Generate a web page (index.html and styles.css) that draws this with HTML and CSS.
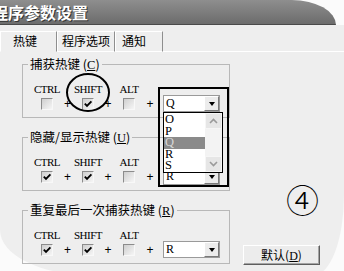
FILE: index.html
```html
<!DOCTYPE html>
<html lang="zh">

<head>
    <meta charset="UTF-8">
    <title>程序参数设置</title>
    <link rel="stylesheet" href="styles.css">
</head>

<body>
    <div class="window">
        <div class="titlebar"><span class="title">程序参数设置</span></div>
        <div class="client">
            <div class="tabs">
                <div class="tab tab-active tab-hotkey">热键</div>
                <div class="tab tab-options">程序选项</div>
                <div class="tab tab-notify">通知</div>
                <div class="tab-rest"></div>
            </div>
            <div class="panel">
                <fieldset class="group">
                    <legend>捕获热键 (<u>C</u>)</legend>
                    <div class="keys">
                        <span class="key">CTRL</span>
                        <span class="key key-shift">SHIFT</span>
                        <span class="key key-alt">ALT</span>
                        <span class="check"></span>
                        <span class="plus">+</span>
                        <span class="check checked"><svg viewBox="0 0 10 10"><path d="M1.8 4.6 L4 6.8 L8.4 2.4"/></svg></span>
                        <span class="plus">+</span>
                        <span class="check"></span>
                        <span class="plus">+</span>
                        <div class="combo"><span class="combo-value">Q</span><span class="combo-button"><i></i></span></div>
                    </div>
                </fieldset>

                <fieldset class="group">
                    <legend>隐藏/显示热键 (<u>U</u>)</legend>
                    <div class="keys">
                        <span class="key">CTRL</span>
                        <span class="key key-shift">SHIFT</span>
                        <span class="key key-alt">ALT</span>
                        <span class="check checked"><svg viewBox="0 0 10 10"><path d="M1.8 4.6 L4 6.8 L8.4 2.4"/></svg></span>
                        <span class="plus">+</span>
                        <span class="check checked"><svg viewBox="0 0 10 10"><path d="M1.8 4.6 L4 6.8 L8.4 2.4"/></svg></span>
                        <span class="plus">+</span>
                        <span class="check"></span>
                        <span class="plus">+</span>
                        <div class="combo"><span class="combo-value">R</span><span class="combo-button"><i></i></span></div>
                    </div>
                </fieldset>

                <div class="bottom-row">
                    <fieldset class="group group-last">
                        <legend>重复最后一次捕获热键 (<u>R</u>)</legend>
                        <div class="keys">
                            <span class="key">CTRL</span>
                            <span class="key key-shift">SHIFT</span>
                            <span class="key key-alt">ALT</span>
                            <span class="check checked"><svg viewBox="0 0 10 10"><path d="M1.8 4.6 L4 6.8 L8.4 2.4"/></svg></span>
                            <span class="plus">+</span>
                            <span class="check checked"><svg viewBox="0 0 10 10"><path d="M1.8 4.6 L4 6.8 L8.4 2.4"/></svg></span>
                            <span class="plus">+</span>
                            <span class="check"></span>
                            <span class="plus">+</span>
                            <div class="combo"><span class="combo-value">R</span><span class="combo-button"><i></i></span></div>
                        </div>
                    </fieldset>
                    <button class="default-button">默认(<u>D</u>)</button>
                </div>
            </div>
        </div>

        <!-- open dropdown of the first combo -->
        <div class="droplist">
            <div class="droplist-items">
                <div class="item">O</div>
                <div class="item">P</div>
                <div class="item item-selected">Q</div>
                <div class="item">R</div>
                <div class="item">S</div>
            </div>
            <div class="scrollbar">
                <span class="scroll-btn"><svg viewBox="0 0 9 6"><path d="M1 5 L4.5 1.5 L8 5"/></svg></span>
                <span class="scroll-track"></span>
                <span class="scroll-btn"><svg viewBox="0 0 9 6"><path d="M1 1 L4.5 4.5 L8 1"/></svg></span>
            </div>
        </div>

        <!-- annotation marks -->
        <div class="mark-ellipse"></div>
        <div class="mark-box"></div>
        <div class="mark-number">④</div>
    </div>
</body>

</html>
```

FILE: styles.css
```css
html,
body {
    margin: 0;
    height: 100%;
    overflow: hidden;
}

body {
    background: #fbfbfb;
    font-family: "Noto Sans CJK SC", sans-serif;
    font-size: 12px;
    color: #000;
}

.window {
    position: relative;
    width: 344px;
    height: 275px;
}

.titlebar {
    height: 25px;
    width: 336px;
    box-sizing: border-box;
    background: linear-gradient(#8e8e8e, #6c6c6c);
    border-bottom: 1px solid #4a4a4a;
    border-top-right-radius: 46px 26px;
    overflow: hidden;
}

.title {
    display: block;
    margin-left: -8px;
    font-size: 16px;
    font-weight: bold;
    line-height: 25px;
    color: #fff;
    text-shadow: 1px 1px 0 #333;
    white-space: nowrap;
}

.client {
    height: 250px;
    background: #eeeeee;
    border-bottom-left-radius: 90px 45px;
    border-bottom-right-radius: 30px 80px;
}

.tabs {
    display: flex;
    padding-top: 6px;
    height: 21px;
}

.tab {
    box-sizing: border-box;
    height: 21px;
    border-top: 1px solid #fff;
    border-left: 1px solid #fff;
    border-right: 1px solid #8e8e8e;
    border-bottom: 1px solid #fff;
    line-height: 17px;
    white-space: nowrap;
}

.tab-active {
    border-bottom-color: transparent;
}

.tab-hotkey {
    width: 57px;
    padding-left: 12px;
}

.tab-options {
    width: 58px;
    padding-left: 4px;
}

.tab-notify {
    width: 48px;
    padding-left: 6px;
}

.tab-rest {
    flex: 1;
    border-bottom: 1px solid #fff;
}

.panel {
    padding-top: 4px;
}

.group {
    margin: 0 0 11px 22px;
    width: 208px;
    min-width: 0;
    box-sizing: border-box;
    padding: 10px 0 5px 5px;
    border: 1px solid #b8b8b8;
}

.group legend {
    padding: 0 2px;
    font-size: 12.5px;
    line-height: 15px;
    white-space: nowrap;
}

.group legend u {
    font-family: "Liberation Serif", serif;
}

.keys {
    display: grid;
    grid-template-columns: 26px 15px 26px 14px 28px 14px auto;
    grid-template-rows: 12px 17px;
    margin-left: 6px;
    align-items: center;
    justify-items: center;
}

.key {
    font-family: "Liberation Serif", serif;
    font-size: 11px;
    letter-spacing: -0.5px;
    line-height: 12px;
    white-space: nowrap;
}

.key-shift {
    grid-column: 3;
}

.key-alt {
    grid-column: 5;
}

.check {
    grid-row: 2;
    width: 12px;
    height: 12px;
    box-sizing: border-box;
    border: 1px solid;
    border-color: #8c8c8c #f8f8f8 #f8f8f8 #8c8c8c;
    background: linear-gradient(135deg, #cfcfcf, #f6f6f6);
}

.check svg {
    display: block;
    width: 10px;
    height: 10px;
}

.check path {
    fill: none;
    stroke: #000;
    stroke-width: 1.9;
}

.plus {
    grid-row: 2;
    font-family: "Liberation Sans", sans-serif;
    font-size: 12px;
    line-height: 12px;
}

.combo {
    grid-row: 2;
    justify-self: start;
    margin-left: 6px;
    width: 57px;
    height: 17px;
    box-sizing: border-box;
    display: flex;
    border: 1px solid #9a9a9a;
    background: #fff;
}

.combo-value {
    flex: 1;
    padding-left: 2px;
    font-family: "Liberation Serif", serif;
    font-size: 12px;
    line-height: 15px;
}

.combo-button {
    width: 15px;
    height: 15px;
    box-sizing: border-box;
    display: flex;
    align-items: center;
    justify-content: center;
    background: #ececec;
    border: 1px solid;
    border-color: #fff #7a7a7a #7a7a7a #fff;
}

.combo-button i {
    border-left: 3.5px solid transparent;
    border-right: 3.5px solid transparent;
    border-top: 4px solid #000;
}

.bottom-row {
    display: flex;
    align-items: flex-end;
}

.group-last {
    margin-bottom: 0;
}

.default-button {
    margin: 0 0 -1px 13px;
    width: 77px;
    height: 20px;
    padding: 0;
    box-sizing: border-box;
    background: #ececec;
    border: 1px solid;
    border-color: #fff #5e5e5e #5e5e5e #fff;
    box-shadow: inset -1px -1px 0 #a4a4a4;
    font-family: "Noto Sans CJK SC", sans-serif;
    font-size: 12px;
    line-height: 17px;
    color: #000;
}

.default-button u {
    font-family: "Liberation Serif", serif;
}

.droplist {
    position: absolute;
    left: 163px;
    top: 112px;
    width: 60px;
    height: 61px;
    box-sizing: border-box;
    display: flex;
    border: 1px solid #000;
    background: #fff;
}

.droplist-items {
    width: 41px;
    padding-top: 1px;
}

.item {
    height: 11.6px;
    padding-left: 1px;
    font-family: "Liberation Serif", serif;
    font-size: 12.5px;
    line-height: 11.6px;
}

.item-selected {
    background: #8a8a8a;
    color: #d8d8d8;
}

.scrollbar {
    flex: 1;
    display: flex;
    flex-direction: column;
    background: #f3f3f3;
}

.scroll-btn {
    height: 14px;
    display: flex;
    align-items: center;
    justify-content: center;
    background: #e6e6e6;
    border: 1px solid #f6f6f6;
}

.scroll-btn svg {
    width: 9px;
    height: 6px;
}

.scroll-btn path {
    fill: none;
    stroke: #9a9a9a;
    stroke-width: 1.6;
}

.scroll-track {
    flex: 1;
}

.mark-ellipse {
    position: absolute;
    left: 66px;
    top: 73px;
    width: 44px;
    height: 39px;
    box-sizing: border-box;
    border: 2px solid #000;
    border-radius: 50%;
}

.mark-box {
    position: absolute;
    left: 158px;
    top: 87px;
    width: 71px;
    height: 100px;
    box-sizing: border-box;
    border: 2px solid #000;
}

.mark-number {
    position: absolute;
    left: 286px;
    top: 182px;
    font-family: "Noto Sans CJK SC", sans-serif;
    font-size: 33px;
    font-weight: 200;
    line-height: 35px;
}
```
